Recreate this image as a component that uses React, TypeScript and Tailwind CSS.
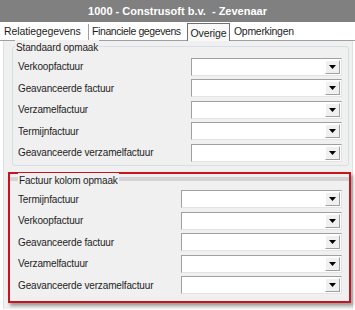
import React from "react";

const standaard = [
  "Verkoopfactuur",
  "Geavanceerde factuur",
  "Verzamelfactuur",
  "Termijnfactuur",
  "Geavanceerde verzamelfactuur",
];

const kolom = [
  "Termijnfactuur",
  "Verkoopfactuur",
  "Geavanceerde factuur",
  "Verzamelfactuur",
  "Geavanceerde verzamelfactuur",
];

function Dropdown({ width }: { width: string }) {
  return (
    <div className={`${width} h-[18px] flex bg-white border border-t-[#a0a0a0] border-l-[#a0a0a0] border-r-[#e3e3e3] border-b-[#e3e3e3]`}>
      <div className="flex-1" />
      <div className="w-[15px] m-[1px] bg-[#f0f0f0] border border-t-white border-l-white border-r-[#a0a0a0] border-b-[#a0a0a0] flex items-center justify-center">
        <svg width="7" height="4" viewBox="0 0 7 4">
          <path d="M0 0h7L3.5 4z" fill="#000" />
        </svg>
      </div>
    </div>
  );
}

function Row({ label, width }: { label: string; width: string }) {
  return (
    <div className="h-[21.5px] flex items-center justify-between">
      <span>{label}</span>
      <Dropdown width={width} />
    </div>
  );
}

export default function App() {
  return (
    <div className="w-[355px] h-[310px] bg-white overflow-hidden text-[10px] tracking-[-0.15px] text-[#1e1e1e] font-['Liberation_Sans',Arial,sans-serif]">
      {/* Title */}
      <div className="h-[22px] bg-[#808080] flex items-center justify-center text-white font-bold text-[11px] tracking-normal">
        1000 - Construsoft b.v.&nbsp; - Zevenaar
      </div>

      {/* Tabs */}
      <div className="h-[19px] flex items-end pl-[4px] border-b border-[#a0a0a0] text-[10.5px] tracking-[-0.1px] whitespace-nowrap">
        <span className="w-[85px] h-[16px] border-r border-[#a0a0a0]">Relatiegegevens</span>
        <span className="w-[98px] h-[16px] pl-[3px] tracking-[-0.4px]">Financiele gegevens</span>
        <span className="w-[43px] h-[18px] pt-[2px] text-center border border-b-0 border-[#707070] bg-[#f8f8f8] -mb-px">Overige</span>
        <span className="h-[16px] pl-[4px] tracking-[-0.3px]">Opmerkingen</span>
      </div>

      {/* Panel */}
      <div className="ml-[3px] mr-[2px] h-[268px] bg-[#f0f0f0] border-x border-[#e0e0e0] pt-[5px]">
        {/* Standaard opmaak */}
        <div className="relative ml-[8px] mr-[3px] border border-[#d5dfe5] rounded-[3px] pt-[9px] pb-[1px] pl-[5px] pr-[6px]">
          <span className="absolute -top-[7px] left-[2px] px-[1px] bg-[#f0f0f0]">Standaard opmaak</span>
          {standaard.map((l) => (
            <Row key={l} label={l} width="w-[151px]" />
          ))}
        </div>

        {/* Factuur kolom opmaak */}
        <div className="relative ml-[4px] mr-[1px] mt-[6px] shadow-[2px_3px_3px_rgba(0,0,0,0.35)]">
          <div className="border-2 border-[#c8141c] pt-[3px] pb-[5px]">
            <div className="relative border-t-[4px] border-[#d4d4d4] pt-[8px] pl-[8px] pr-[7px]">
              <span className="absolute -top-[8px] left-[8px] px-[1px] bg-[#f0f0f0]">Factuur kolom opmaak</span>
              {kolom.map((l) => (
                <Row key={l} label={l} width="w-[161px]" />
              ))}
            </div>
          </div>
        </div>
      </div>
    </div>
  );
}
